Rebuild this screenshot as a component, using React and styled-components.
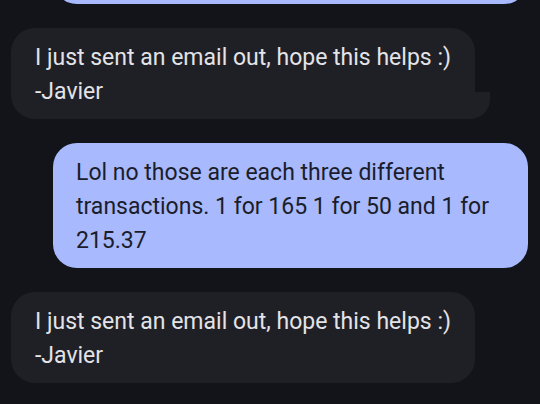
import React from "react";
import styled, { createGlobalStyle } from "styled-components";

const GlobalStyle = createGlobalStyle`
  html, body {
    margin: 0;
    padding: 0;
    background: #131419;
  }
  * {
    box-sizing: border-box;
  }
`;

const messages = [
  {
    id: 1,
    mine: true,
    text: "Can you send me the receipts for the charges on my card?",
  },
  {
    id: 2,
    mine: false,
    tail: true,
    text: "I just sent an email out, hope this helps :)\n-Javier",
  },
  {
    id: 3,
    mine: true,
    text:
      "Lol no those are each three different transactions. 1 for 165 1 for 50 and 1 for 215.37",
  },
  {
    id: 4,
    mine: false,
    text: "I just sent an email out, hope this helps :)\n-Javier",
  },
];

const App = () => {
  return (
    <Screen>
      <GlobalStyle />
      <Thread>
        {messages.map((m) => (
          <Row key={m.id} $mine={m.mine}>
            <Bubble $mine={m.mine} $tail={m.tail}>
              {m.text}
            </Bubble>
          </Row>
        ))}
      </Thread>
    </Screen>
  );
};

export default App;

const Screen = styled.main`
  width: 540px;
  height: 404px;
  overflow: hidden;
  background: #131419;
  display: flex;
  flex-direction: column;
  justify-content: flex-end;
`;

const Thread = styled.div`
  display: flex;
  flex-direction: column;
  gap: 24px;
  padding: 0 12px 21px 11px;
`;

const Row = styled.div`
  display: flex;
  justify-content: ${(p) => (p.$mine ? "flex-end" : "flex-start")};
`;

const Bubble = styled.div`
  position: relative;
  max-width: ${(p) => (p.$mine ? "475px" : "470px")};
  padding: ${(p) => (p.$mine ? "13px 23px 10px" : "13px 24px 10px")};
  border-radius: 24px;
  background: ${(p) => (p.$mine ? "#a8b9fd" : "#1f2025")};
  color: ${(p) => (p.$mine ? "#1b1d2b" : "#e3e3e8")};
  font-family: Roboto, "Noto Sans", sans-serif;
  font-size: 23px;
  line-height: 34px;
  white-space: pre-line;

  &::after {
    content: "";
    display: ${(p) => (p.$tail ? "block" : "none")};
    position: absolute;
    right: -15px;
    bottom: 0;
    width: 40px;
    height: 27px;
    background: #1f2025;
    border-bottom-right-radius: 20px;
  }
`;
